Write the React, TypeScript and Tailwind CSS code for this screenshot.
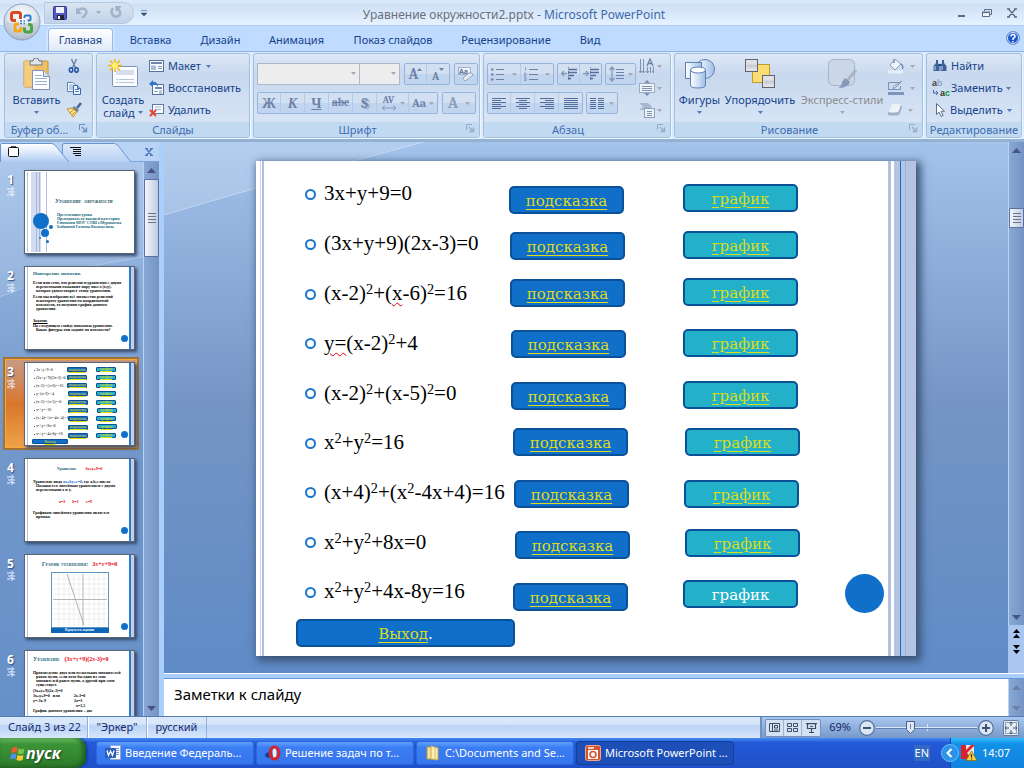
import type { CSSProperties, ReactNode } from 'react';

/* ---------- shared data ---------- */

type Row = { id: string; formula: ReactNode; hint: [number, number]; graph: [number, number]; link: boolean };

const rows: Row[] = [
  { id: 'a', formula: '3x+y+9=0', hint: [253, 25], graph: [427, 23], link: true },
  { id: 'b', formula: '(3x+y+9)(2x-3)=0', hint: [254, 71], graph: [427, 70], link: true },
  {
    id: 'c',
    formula: (
      <>
        (x-2)<Sq />+(<Typo>x</Typo>-6)<Sq />=16
      </>
    ),
    hint: [254, 118],
    graph: [427, 117],
    link: true,
  },
  {
    id: 'd',
    formula: (
      <>
        <Typo>y=</Typo>(x-2)<Sq />+4
      </>
    ),
    hint: [255, 169],
    graph: [427, 168],
    link: true,
  },
  {
    id: 'e',
    formula: (
      <>
        (x-2)<Sq />+(x-5)<Sq />=0
      </>
    ),
    hint: [255, 221],
    graph: [427, 220],
    link: true,
  },
  {
    id: 'f',
    formula: (
      <>
        x<Sq />+y<Sq />=16
      </>
    ),
    hint: [257, 267],
    graph: [429, 267],
    link: true,
  },
  {
    id: 'g',
    formula: (
      <>
        (x+4)<Sq />+(x<Sq />-4x+4)=16
      </>
    ),
    hint: [258, 319],
    graph: [428, 319],
    link: true,
  },
  {
    id: 'h',
    formula: (
      <>
        x<Sq />+y<Sq />+8x=0
      </>
    ),
    hint: [259, 370],
    graph: [429, 368],
    link: true,
  },
  {
    id: 'i',
    formula: (
      <>
        x<Sq />+y<Sq />+4x-8y=16
      </>
    ),
    hint: [257, 422],
    graph: [427, 419],
    link: false,
  },
];

function Sq() {
  return <span className="align-[0.4em] text-[68%] leading-none">2</span>;
}

function Typo({ children }: { children: ReactNode }) {
  return (
    <span className="underline decoration-red-600 decoration-wavy decoration-1 underline-offset-2 group-data-[mini=true]:no-underline">
      {children}
    </span>
  );
}

const at = (p: [number, number], k = 1): CSSProperties => ({ left: p[0] / k, top: p[1] / k });

/* ---------- small pieces ---------- */

function Caret({ off = false, className = '' }: { off?: boolean; className?: string }) {
  return (
    <svg viewBox="0 0 5 3" className={`h-[3px] w-[5px] shrink-0 ${className}`} aria-hidden="true">
      <path d="M0 0h5L2.500 3z" fill={off ? '#a5a9b3' : '#4d7ab8'} />
    </svg>
  );
}

function Tri({ up = false, faded = false }: { up?: boolean; faded?: boolean }) {
  return (
    <svg viewBox="0 0 9 5" className="h-[5px] w-[9px]" aria-hidden="true">
      <path d={up ? 'M0 5h9L4.500 0z' : 'M0 0h9L4.500 5z'} fill={faded ? '#6c7fa5' : '#46557f'} />
    </svg>
  );
}

function Grip() {
  return (
    <span className="flex flex-col gap-[2px]">
      <i className="h-px w-2 bg-[#6d7486]" />
      <i className="h-px w-2 bg-[#6d7486]" />
      <i className="h-px w-2 bg-[#6d7486]" />
      <i className="h-px w-2 bg-[#6d7486]" />
    </span>
  );
}

function Launcher({ off = false }: { off?: boolean }) {
  const c = off ? '#9aa9c4' : '#6c8fc0';
  return (
    <button aria-label="Параметры группы" className="absolute right-[4px] bottom-[4px]">
      <svg viewBox="0 0 9 9" className="size-[9px]">
        <path d="M.5 6V.5H6" fill="none" stroke={c} />
        <path d="M3 3l4 4M7.500 3.500v4h-4" fill="none" stroke={c} strokeWidth="1.300" />
      </svg>
    </button>
  );
}

function Group({ title, width, launcher, children }: { title: string; width: string; launcher?: 'on' | 'off'; children: ReactNode }) {
  return (
    <section
      className={`${width} relative flex h-[85px] shrink-0 flex-col overflow-hidden rounded-[3px] border border-[#a0c0e0] bg-linear-to-b from-[#dde8f5] from-0% via-[#c8d8ee] via-25% to-[#dbe8f7] shadow-[1px_1px_0_#eef6ff]`}
    >
      <div className="min-h-0 flex-1">{children}</div>
      <h2 className="h-[15px] bg-[#c1d9f1] text-center text-[11px] leading-[15px] whitespace-nowrap text-[#3e6db0]">
        <span className={launcher ? 'pr-[18px]' : ''}>{title}</span>
      </h2>
      {launcher && <Launcher off={launcher === 'off'} />}
    </section>
  );
}

function Bar({ children }: { children: ReactNode }) {
  return (
    <div className="flex h-[22px] divide-x divide-[#b3cbea] rounded-[2px] border border-[#97b5dc] bg-linear-to-b from-[#d3e0f2] from-50% to-[#c2d5ef] to-50%">
      {children}
    </div>
  );
}

function Tool({ label, w = 'w-[23px]', children }: { label: string; w?: string; children: ReactNode }) {
  return (
    <button aria-label={label} disabled className={`${w} flex items-center justify-center gap-[3px] text-[#6c82a8]`}>
      {children}
    </button>
  );
}

function Lines({ kind }: { kind: 'left' | 'center' | 'right' | 'full' | 'cols' }) {
  const d = {
    left: 'M0 .5h14M0 2.500h9M0 4.500h14M0 6.500h9M0 8.500h14M0 10.500h9',
    center: 'M0 .5h14M3 2.500h8M0 4.500h14M3 6.500h8M0 8.500h14M3 10.500h8',
    right: 'M0 .5h14M5 2.500h9M0 4.500h14M5 6.500h9M0 8.500h14M5 10.500h9',
    full: 'M0 .5h14M0 2.500h14M0 4.500h14M0 6.500h14M0 8.500h14M0 10.500h14',
    cols: 'M0 .5h6M8 .5h6M0 2.500h6M8 2.500h6M0 4.500h6M8 4.500h6M0 6.500h6M8 6.500h6M0 8.500h6M8 8.500h6M0 10.500h6M8 10.500h6',
  }[kind];
  return (
    <svg viewBox="0 0 14 11" className="h-[11px] w-[14px]">
      <path d={d} stroke="#536d9c" />
    </svg>
  );
}

function MiniIcon({ name }: { name: string }) {
  const box = 'size-4 shrink-0';
  switch (name) {
    case 'cut':
      return (
        <svg viewBox="0 0 16 16" className={box}>
          <path d="M5.500 1l4 9M10.500 1l-4 9" stroke="#6f86aa" strokeWidth="1.500" fill="none" />
          <ellipse cx="5" cy="12" rx="1.700" ry="2.200" fill="none" stroke="#1c4f9e" strokeWidth="1.500" />
          <ellipse cx="10.500" cy="12" rx="1.700" ry="2.200" fill="none" stroke="#1c4f9e" strokeWidth="1.500" />
        </svg>
      );
    case 'copy':
      return (
        <svg viewBox="0 0 16 16" className={box}>
          <path d="M1.500 2.500h5l3 2v7h-8z" fill="#fff" stroke="#5b7fb4" />
          <path d="M3 5h4M3 7h4M3 9h4" stroke="#6e96cf" />
          <path d="M7.500 5.500h4l3 3v6h-7z" fill="#eaf2ff" stroke="#3f68a8" />
          <path d="M9 9.500h4M9 11.500h4" stroke="#4f7fc4" />
          <path d="M11.500 5.500v3h3" fill="#9fc0ee" stroke="#3f68a8" />
        </svg>
      );
    case 'brush':
      return (
        <svg viewBox="0 0 16 16" className={box}>
          <path d="M15 1l-4 5" stroke="#44639a" strokeWidth="2.500" />
          <path d="M8 4l5 4-2 2.500-5-4z" fill="#7a7f8c" />
          <path d="M1 7l5-1 5 4-4 5z" fill="#f4e08c" stroke="#c4972e" />
          <path d="M4 11l3-3M6 13l3-3" stroke="#c4972e" />
        </svg>
      );
    case 'layout':
      return (
        <svg viewBox="0 0 16 16" className={box}>
          <rect x=".5" y="2.500" width="14" height="11" fill="#f7faff" stroke="#56719d" />
          <path d="M2 5h11" stroke="#6f87ab" strokeWidth="2" />
          <rect x="2" y="7.500" width="5" height="4.500" fill="#a9bbd4" />
          <path d="M9 8.500h4M9 10.500h4" stroke="#7c93b7" />
        </svg>
      );
    case 'reset':
      return (
        <svg viewBox="0 0 16 16" className={box}>
          <rect x="3.500" y="4.500" width="11" height="10" fill="#f7faff" stroke="#56719d" />
          <path d="M6 8h7" stroke="#6f87ab" strokeWidth="2" />
          <path d="M5.500 11.500h3M10 11h3M10 13h3" stroke="#7c93b7" />
          <path d="M0 4l4-4v2c4 0 5 2 5 5-1-2-2-2.500-5-2.500V7z" fill="#3470cf" />
        </svg>
      );
    case 'delete':
      return (
        <svg viewBox="0 0 16 16" className={box}>
          <rect x="3.500" y="2.500" width="11" height="9" fill="#f7faff" stroke="#5f7aa6" />
          <path d="M6 5h6M6 7.500h6" stroke="#a6b7cf" />
          <path d="M1 8l6 6M7 8l-6 6" stroke="#e8442c" strokeWidth="2" />
        </svg>
      );
    case 'find':
      return (
        <svg viewBox="0 0 16 16" className={box}>
          <path d="M4 2h2v3l1.500 3v5h-6V8L4 5zM10 2h2v3l2.500 3v5h-6V8L10 5z" fill="#3e619c" />
          <path d="M3 8v4M10 8v4" stroke="#c3d6f3" />
          <path d="M6.500 7h3" stroke="#24457d" strokeWidth="2" />
        </svg>
      );
    case 'replace':
      return (
        <span className="flex w-[18px] shrink-0 flex-col font-['Liberation_Sans',sans-serif] text-[9px] leading-[10px] font-bold" aria-hidden="true">
          <span className="text-left text-[#444]">a<span className="text-[#9aa5b8]">b</span></span>
          <span className="flex items-center justify-end gap-px text-[#333]">
            <svg viewBox="0 0 6 6" className="size-[6px]"><path d="M.5 0v3H5M3 1l2 2-2 2" fill="none" stroke="#3b69ab" /></svg>
            <span>a<span className="text-[#159a24]">c</span></span>
          </span>
        </span>
      );
    case 'select':
      return (
        <svg viewBox="0 0 16 16" className={box}>
          <path d="M4.500 1.500v11l2.600-2.500 2 4.500 2-1-2-4.300h3.400z" fill="#fff" stroke="#5a6d90" />
        </svg>
      );
    case 'fill':
      return (
        <svg viewBox="0 0 18 16" className="h-4 w-[18px] shrink-0">
          <path d="M8 1l6 5-6 6-5-5z" fill="#eef3fa" stroke="#8c9db9" />
          <path d="M7 5V1M14 6c2 1 2 4 1.500 5" fill="none" stroke="#7a8fb4" strokeWidth="1.500" />
          <path d="M1 14h15" stroke="#e9eef6" strokeWidth="3" />
        </svg>
      );
    case 'outline':
      return (
        <svg viewBox="0 0 18 16" className="h-4 w-[18px] shrink-0">
          <path d="M12 2.500H1.500v7h12V6" fill="none" stroke="#7a90b5" />
          <path d="M15 1L8 8l-2 .5.500-2z" fill="#e6edf7" stroke="#8496b4" />
          <path d="M1 13.500h16" stroke="#7d95be" strokeWidth="3" />
        </svg>
      );
    case 'effect':
      return (
        <svg viewBox="0 0 16 16" className={box}>
          <path d="M5 3.500h8q2.500 0 2 2.500l-2 5q-1 2.500-3.500 2.500H3Q.5 13.500 1 11l2-5q.5-2.500 2-2.500z" fill="#9fb1cd" />
          <path d="M6 2h6q2 0 1.500 2L12 8.500q-.7 2-3 2H4q-2.500 0-2-2L4 4q.5-2 2-2z" fill="#eef2f8" />
        </svg>
      );
    case 'direction':
      return (
        <svg viewBox="0 0 16 16" className={box}>
          <path d="M1.500 1v14M4.500 1v14M8.500 9v6M11.500 9v6M14.500 9v6M0 13l1.500 2L3 13M3.500 13l1 2 1-2M7 13l1.500 2L10 13M13 13l1.500 2" fill="none" stroke="#8193b2" />
          <path d="M8 8l3-7 3 7M9 5.500h4" fill="none" stroke="#6c82a8" strokeWidth="1.300" />
        </svg>
      );
    case 'valign':
      return (
        <svg viewBox="0 0 16 16" className={box}>
          <rect x=".5" y="3.500" width="15" height="9" fill="#eef3fa" stroke="#9aabc6" />
          <path d="M3 6.500h10M3 8.500h10M3 10.500h10" stroke="#8193b2" />
          <path d="M5 3l3-3 3 3zM5 13l3 3 3-3z" fill="#7d90b2" />
        </svg>
      );
    default:
      return (
        <svg viewBox="0 0 16 16" className={box}>
          <path d="M0 1h9l4 3.500L9 8H0l4-3.500z" fill="#a9b8cf" />
          <rect x="5.500" y="6.500" width="10" height="9" fill="#edf2f9" stroke="#8c9fbe" />
          <path d="M8 9.500h5M8 11.500h5M8 13.500h5" stroke="#8193b2" />
        </svg>
      );
  }
}

function IconRow({ icon, text, caret, gap = 'gap-[3px]' }: { icon: string; text?: string; caret?: 'on' | 'off'; gap?: string }) {
  return (
    <button aria-label={text ?? icon} className={`flex h-[22px] items-center ${gap} whitespace-nowrap text-[#15428b]`}>
      <MiniIcon name={icon} />
      {text && <span className="text-[11px] leading-4">{text}</span>}
      {caret && <Caret off={caret === 'off'} className="ml-[2px]" />}
    </button>
  );
}

function BigButton({ text, second, off, w, children }: { text: string; second?: string; off?: boolean; w: string; children: ReactNode }) {
  return (
    <button className={`${w} flex flex-col items-center text-[11px] leading-[13px] whitespace-nowrap ${off ? 'text-[#8d8d8d]' : 'text-[#15428b]'}`}>
      <span className="flex h-[38px] items-center justify-center">{children}</span>
      <span>{text}</span>
      {second ? (
        <span className="flex items-center gap-[3px]">
          {second}
          <Caret off={off} />
        </span>
      ) : (
        <Caret off={off} className="mt-[5px]" />
      )}
    </button>
  );
}

/* ---------- ribbon ---------- */

function TitleBar() {
  return (
    <header className="relative flex h-[26px] shrink-0 items-center border-b border-[#b0cff7] bg-linear-to-b from-[#d9e8fb] from-10% via-[#cfe0f6] via-20% to-[#e6f2ff]">
      <div className="ml-[44px] flex h-[22px] w-[90px] items-center gap-[9px] rounded-r-full border border-[#b6c8e3] bg-linear-to-b from-[#d9e4f2] to-[#c2d3e9] pl-2">
        <button aria-label="Сохранить">
          <svg viewBox="0 0 14 14" className="size-[14px]">
            <rect x=".5" y=".5" width="13" height="13" rx="1" fill="#5657c3" stroke="#333791" />
            <rect x="3" y="1" width="8" height="6" fill="#eef2fc" />
            <rect x="4" y="9" width="7" height="5" fill="#20243f" />
            <rect x="5" y="10" width="2" height="3" fill="#fff" />
          </svg>
        </button>
        <button aria-label="Отменить" disabled className="flex items-center gap-2">
          <svg viewBox="0 0 12 13" className="h-[13px] w-3">
            <path d="M2 4.500c5-4 10-1 8 3Q9 10 6 12" fill="none" stroke="#a3b1c9" strokeWidth="2.400" />
            <path d="M0 1v7h6z" fill="#a3b1c9" />
          </svg>
          <Caret off />
        </button>
        <button aria-label="Повторить" disabled>
          <svg viewBox="0 0 12 13" className="h-[13px] w-3">
            <path d="M3 2Q0 6 3 9.500q4 3 7-1 1-4-3-6" fill="none" stroke="#a3b1c9" strokeWidth="2.400" />
            <path d="M5 0h6v1L6 6z" fill="#a3b1c9" />
          </svg>
        </button>
      </div>
      <button aria-label="Настройка панели" className="ml-[7px]">
        <svg viewBox="0 0 6 6" className="size-[6px]">
          <path d="M0 .5h6M0 3h6L3 6z" stroke="#4a6487" strokeWidth=".6" fill="#31537f" />
        </svg>
      </button>
      <h1 className="flex-1 pt-1 pr-[104px] pl-[28px] text-center text-[12px] whitespace-nowrap text-[#3e6aaa]">
        <span className="text-[#69707c]">Уравнение окружности2.pptx</span> - Microsoft PowerPoint
      </h1>
      <div className="flex items-center gap-[15px] pr-[7px]">
        <button aria-label="Свернуть">
          <svg viewBox="0 0 10 10" className="size-[10px]"><path d="M1 8h7" stroke="#5b6b85" strokeWidth="2" /></svg>
        </button>
        <button aria-label="Развернуть">
          <svg viewBox="0 0 10 10" className="size-[10px]">
            <path d="M2.500 3V1.500h7v5H8" fill="none" stroke="#5b6b85" />
            <path d="M.5 4.500h7v4h-7zM0 4h8" fill="#eef5ff" stroke="#5b6b85" />
          </svg>
        </button>
        <button aria-label="Закрыть">
          <svg viewBox="0 0 10 10" className="size-[10px]"><path d="M1.500 1l7 8M8.500 1l-7 8M0 1h3M7 1h3M0 9h3M7 9h3" stroke="#5b6b85" strokeWidth="1.300" /></svg>
        </button>
      </div>
      <button aria-label="Кнопка Office" className="absolute top-[3px] left-[3px] z-10">
        <svg viewBox="0 0 38 38" className="size-[38px]">
          <defs>
            <radialGradient id="orb" cx=".5" cy=".35" r=".65">
              <stop offset="0" stopColor="#fff" />
              <stop offset=".6" stopColor="#dfe5ee" />
              <stop offset="1" stopColor="#a8b5c8" />
            </radialGradient>
          </defs>
          <circle cx="19" cy="19" r="18" fill="url(#orb)" stroke="#8da0bc" />
          <path d="M3 19a16 16 0 0 0 32 0Q19 23 3 19z" fill="#b9c3d1" opacity=".5" />
          <g fill="none" strokeWidth="3">
            <path d="M13 17.500h-2.500q-2 0-2-2v-4q0-2 2-2h5q2 0 2 2V16" stroke="#d9481f" />
            <path d="M21.500 15v-1.500q0-1 1-1h4q1 0 1 1v3q0 1-1 1h-2" stroke="#2f7bd0" strokeWidth="2" />
            <path d="M16 21h-2.500q-1.500 0-1.500 1.500v3.500q0 2 1.500 2H16q2 0 2-2v-2" stroke="#f4a61c" />
            <path d="M21.500 24.500V27q0 2 2 2h3q2 0 2-2v-3.500q0-2-2-2H25" stroke="#4aa63c" />
          </g>
          <path d="M17 18h2M20.500 18h1.500M17 20.500h2M20.500 20.500h1.500" stroke="#3979c8" strokeWidth="1.500" />
        </svg>
      </button>
    </header>
  );
}

const tabs = [
  ['Вставка', 'w-[71px]'],
  ['Дизайн', 'w-[69px]'],
  ['Анимация', 'w-[83px]'],
  ['Показ слайдов', 'w-[110px]'],
  ['Рецензирование', 'w-[116px]'],
  ['Вид', 'w-[52px]'],
];

function TabStrip() {
  return (
    <nav className="flex h-[25px] shrink-0 items-end bg-[#bfdbff] pr-[4px] pl-[48px] text-[11px] text-[#15428b]">
      <button className="mr-[2px] h-[23px] w-[65px] rounded-t-[4px] border border-b-0 border-[#97b9e8] bg-linear-to-b from-white to-[#dfeaf8] shadow-[0_0_3px_#fff]">Главная</button>
      {tabs.map(([t, w]) => (
        <button key={t} className={`${w} h-[22px] whitespace-nowrap`}>{t}</button>
      ))}
      <button aria-label="Справка" className="mb-[6px] ml-auto">
        <svg viewBox="0 0 14 14" className="size-[14px]">
          <circle cx="7" cy="7" r="6.500" fill="#1c56cf" stroke="#7795c7" />
          <circle cx="7" cy="7" r="5.500" fill="none" stroke="#dce9ff" />
          <path d="M5 5.500Q5 3.500 7 3.500t2 2Q9 6.500 7 7.500V9" fill="none" stroke="#fff" strokeWidth="1.500" />
          <path d="M6.300 10h1.500v1.300H6.300z" fill="#fff" />
        </svg>
      </button>
    </nav>
  );
}

function Ribbon() {
  return (
    <div className="flex h-[91px] shrink-0 gap-[3px] overflow-hidden border-t border-b-[3px] border-t-[#8db2e3] border-b-[#94b1d4] bg-[#dceafb] pt-px pr-[2px] pl-1">
      <Group title="Буфер об..." width="w-[89px]" launcher="on">
        <div className="flex pt-px pl-[5px]">
          <BigButton text="Вставить" w="w-[53px]">
            <svg viewBox="0 0 28 32" className="h-[32px] w-[28px]">
              <rect x="1" y="3" width="24" height="26" rx="1" fill="#efbf66" stroke="#c9923a" />
              <rect x="1" y="3" width="10" height="26" fill="#f7d58e" opacity=".6" />
              <path d="M7 3h3q0-3 3-3t3 3h3v4H7z" fill="#dfe4ec" stroke="#717986" />
              <path d="M9.500 12.500h11l6 6v13h-17z" fill="#fff" stroke="#7f91b5" />
              <path d="M20.500 12.500v6h6" fill="#d7e2f3" stroke="#7f91b5" />
              <path d="M12 17.500h7M12 20.500h12M12 23.500h12M12 26.500h12" stroke="#9aaed0" />
            </svg>
          </BigButton>
          <div className="flex flex-col pl-[3px]">
            <IconRow icon="cut" />
            <IconRow icon="copy" />
            <IconRow icon="brush" />
          </div>
        </div>
      </Group>

      <Group title="Слайды" width="w-[154px]">
        <div className="flex pt-px pl-[3px]">
          <BigButton text="Создать" second="слайд" w="w-[46px]">
            <svg viewBox="0 0 32 32" className="size-[32px]">
              <rect x="5.500" y="8.500" width="25" height="20" rx="1" fill="#fbfcff" stroke="#8093b4" />
              <rect x="9" y="12" width="18" height="5" fill="#d5deec" />
              <path d="M9 21.500h2M12 21.500h15M9 24.500h2M12 24.500h15" stroke="#b7c3d7" />
              <path d="M8 1v13M1 7.500h14M3 2.500l10 10M13 2.500l-10 10" stroke="#f6b80f" strokeWidth="1.600" />
              <circle cx="8" cy="7.500" r="3" fill="#ffee66" />
            </svg>
          </BigButton>
          <div className="flex flex-col pl-[3px]">
            <IconRow icon="layout" text="Макет" caret="on" />
            <IconRow icon="reset" text="Восстановить" />
            <IconRow icon="delete" text="Удалить" />
          </div>
        </div>
      </Group>

      <Group title="Шрифт" width="w-[227px]" launcher="off">
        <div className="flex flex-col gap-[7px] pt-[9px] pl-[3px]">
          <div className="flex h-[22px] items-center gap-1">
            <div className="flex">
              <label className="relative block">
                <select aria-label="Шрифт" disabled className="block h-[22px] w-[103px] appearance-none border border-[#abb8cb] bg-[#ededed]" />
                <Caret off className="absolute top-[9px] right-1" />
              </label>
              <label className="relative block">
                <select aria-label="Размер шрифта" disabled className="block h-[22px] w-[40px] appearance-none border border-l-0 border-[#abb8cb] bg-[#ededed]" />
                <Caret off className="absolute top-[9px] right-1" />
              </label>
            </div>
            <Bar>
              <Tool label="Увеличить размер" w="w-[22px]">
                <span className="pt-px font-serif text-[15px] leading-none font-bold">A</span>
                <svg viewBox="0 0 5 3" className="mt-1 -ml-[4px] h-[3px] w-[5px] self-start"><path d="M0 3h5L2.500 0z" fill="#6c82a8" /></svg>
              </Tool>
              <Tool label="Уменьшить размер" w="w-[22px]">
                <span className="pt-1 font-serif text-[11px] leading-none font-bold">A</span>
                <svg viewBox="0 0 5 3" className="mt-1 -ml-[3px] h-[3px] w-[5px] self-start"><path d="M0 0h5L2.500 3z" fill="#6c82a8" /></svg>
              </Tool>
            </Bar>
            <Bar>
              <Tool label="Очистить формат" w="w-[22px]">
                <svg viewBox="0 0 17 17" className="size-[17px]">
                  <rect x=".5" y="1.500" width="12" height="7" fill="#f0f4fa" stroke="#9fb0ca" />
                  <text x="1" y="8" fontSize="7" fontWeight="bold" fill="#5d7299">Aa</text>
                  <path d="M5 12l6-5q3-1 4 2l-6 5q-4 2-4-2z" fill="#e6ebf3" stroke="#93a4c0" />
                </svg>
              </Tool>
            </Bar>
          </div>
          <div className="flex gap-1 font-serif text-[14px] font-bold">
            <Bar>
              <Tool label="Полужирный">Ж</Tool>
              <Tool label="Курсив" w="w-[24px]"><i>К</i></Tool>
              <Tool label="Подчёркнутый" w="w-[24px]"><u>Ч</u></Tool>
              <Tool label="Зачёркнутый" w="w-[24px]"><s className="text-[11px]">abc</s></Tool>
              <Tool label="Тень" w="w-[24px]"><span className="[text-shadow:2px_1px_1px_#98a9c5]">S</span></Tool>
              <Tool label="Интервал" w="w-[32px]">
                <span className="flex flex-col items-center text-[10px] leading-[9px]">
                  AV
                  <svg viewBox="0 0 16 6" className="h-[6px] w-4"><path d="M1 3h14M4 .5L1 3l3 2.500M12 .5L15 3l-3 2.500" fill="none" stroke="#8297bb" /></svg>
                </span>
                <Caret off />
              </Tool>
              <Tool label="Регистр" w="w-[28px]"><span className="text-[12px]">Aa</span><Caret off /></Tool>
            </Bar>
            <Bar>
              <Tool label="Цвет текста" w="w-[32px]"><span className="pr-1 text-[16px] text-[#8c9dbb]">A</span><Caret off /></Tool>
            </Bar>
          </div>
        </div>
      </Group>

      <Group title="Абзац" width="w-[188px]" launcher="off">
        <div className="flex justify-between pr-[8px] pl-[3px]">
          <div className="flex flex-col gap-[7px] pt-[9px]">
            <div className="flex gap-[3px]">
              <Bar>
                <Tool label="Маркеры" w="w-[33px]">
                  <svg viewBox="0 0 14 14" className="size-[14px]">
                    <path d="M5 2.500h8M5 7.500h8M5 12.500h8" stroke="#6c82a8" />
                    <path d="M0 1.500h2.500v2H0zM0 6.500h2.500v2H0zM0 11.500h2.500v2H0z" fill="#6c82a8" />
                  </svg>
                  <Caret off className="ml-1" />
                </Tool>
                <Tool label="Нумерация" w="w-[32px]">
                  <svg viewBox="0 0 14 14" className="size-[14px]">
                    <path d="M5 2.500h9M5 7.500h9M5 12.500h9" stroke="#6c82a8" />
                    <path d="M1.500 0v4M0 6h2v1.500H0V9h2.500M0 10.500h2v3H0M0 12h2" fill="none" stroke="#8294b4" strokeWidth=".8" />
                  </svg>
                  <Caret off className="ml-1" />
                </Tool>
              </Bar>
              <Bar>
                <Tool label="Уменьшить отступ" w="w-[22px]">
                  <svg viewBox="0 0 16 14" className="h-[14px] w-4">
                    <path d="M7 2.500h9M7 5.500h9M7 8.500h6M7 11.500h3" stroke="#536d9c" strokeWidth="1.500" />
                    <path d="M7.500 0v14" stroke="#6c82a8" strokeDasharray="1 1" />
                    <path d="M6 6.500H1M3 4L.5 6.500 3 9" fill="none" stroke="#8597b7" strokeWidth="1.300" />
                  </svg>
                </Tool>
                <Tool label="Увеличить отступ" w="w-[21px]">
                  <svg viewBox="0 0 16 14" className="h-[14px] w-4">
                    <path d="M7 2.500h9M7 5.500h9M7 8.500h6M7 11.500h3" stroke="#536d9c" strokeWidth="1.500" />
                    <path d="M7.500 0v14" stroke="#6c82a8" strokeDasharray="1 1" />
                    <path d="M0 6.500h5M3 4l2.500 2.500L3 9" fill="none" stroke="#8597b7" strokeWidth="1.300" />
                  </svg>
                </Tool>
              </Bar>
              <Bar>
                <Tool label="Междустрочный интервал" w="w-[29px]">
                  <svg viewBox="0 0 16 16" className="size-4">
                    <path d="M7 3.500h8M7 6.500h8M7 9.500h8M7 12.500h8" stroke="#6c82a8" />
                    <path d="M3 1v14M.5 4L3 1l2.500 3M.5 12L3 15l2.500-3" fill="none" stroke="#8597b7" strokeWidth="1.300" />
                  </svg>
                  <Caret off />
                </Tool>
              </Bar>
            </div>
            <div className="flex gap-[3px]">
              <Bar>
                <Tool label="По левому краю"><Lines kind="left" /></Tool>
                <Tool label="По центру" w="w-[24px]"><Lines kind="center" /></Tool>
                <Tool label="По правому краю" w="w-[24px]"><Lines kind="right" /></Tool>
                <Tool label="По ширине"><Lines kind="full" /></Tool>
              </Bar>
              <Bar>
                <Tool label="Колонки" w="w-[30px]"><Lines kind="cols" /><Caret off className="ml-[2px]" /></Tool>
              </Bar>
            </div>
          </div>
          <div className="flex flex-col pt-px">
            <IconRow icon="direction" caret="off" gap="gap-0" />
            <IconRow icon="valign" caret="off" gap="gap-0" />
            <IconRow icon="smartart" caret="off" gap="gap-0" />
          </div>
        </div>
      </Group>

      <Group title="Рисование" width="w-[249px]" launcher="off">
        <div className="flex pt-px pl-[3px]">
          <BigButton text="Фигуры" w="w-[43px]">
            <svg viewBox="0 0 32 32" className="size-[32px]">
              <defs>
                <linearGradient id="shape" x1="0" x2="1"><stop stopColor="#fff" /><stop offset="1" stopColor="#9ebfe9" /></linearGradient>
              </defs>
              <circle cx="21" cy="11" r="9.500" fill="url(#shape)" stroke="#5d81b7" />
              <rect x="1.500" y="4.500" width="16" height="16" fill="url(#shape)" stroke="#5d81b7" />
              <path d="M6.500 12v15q0 3 7.500 3t7.500-3V12" fill="url(#shape)" stroke="#5d81b7" />
              <ellipse cx="14" cy="12" rx="7.500" ry="3" fill="#fff" stroke="#5d81b7" />
            </svg>
          </BigButton>
          <BigButton text="Упорядочить" w="w-[78px]">
            <svg viewBox="0 0 32 32" className="size-[32px]">
              <rect x="8.500" y="6.500" width="17" height="18" fill="#f9dd73" stroke="#c39a2d" />
              <rect x="1.500" y="1.500" width="12" height="12" fill="#dfe1e5" stroke="#5e6470" />
              <rect x="18.500" y="17.500" width="12" height="12" fill="#dfe1e5" stroke="#5e6470" />
              <path d="M3 8h10M20 24h10" stroke="#c9ccd2" strokeWidth="3" />
            </svg>
          </BigButton>
          <BigButton text="Экспресс-стили" off w="w-[86px]">
            <svg viewBox="0 0 32 32" className="size-[32px]">
              <rect x="2.500" y="1.500" width="26" height="26" rx="5" fill="#cbd6e6" stroke="#a5b5ce" />
              <path d="M30 12L20 24" stroke="#a9b4c6" strokeWidth="3" />
              <path d="M19 20l5 4q-2 6-12 6 4-2 4-6z" fill="#8699b8" />
            </svg>
          </BigButton>
          <div className="flex flex-col pl-[2px]">
            <IconRow icon="fill" caret="off" />
            <IconRow icon="outline" caret="off" />
            <IconRow icon="effect" caret="off" />
          </div>
        </div>
      </Group>

      <Group title="Редактирование" width="w-[96px]">
        <div className="flex flex-col pt-px pl-[5px]">
          <IconRow icon="find" text="Найти" />
          <IconRow icon="replace" text="Заменить" caret="on" gap="gap-px" />
          <IconRow icon="select" text="Выделить" caret="on" gap="gap-[2px]" />
        </div>
      </Group>
    </div>
  );
}

/* ---------- outline pane ---------- */

const dot = 'absolute rounded-full bg-[#106fc8]';

function Edges() {
  return (
    <>
      <i className="absolute inset-y-0 left-[2px] w-px bg-[#b5c0e0]" />
      <i className="absolute inset-y-0 right-0 w-[3px] bg-[#c3cee8]" />
      <i className="absolute inset-y-0 right-[3px] w-[2px] bg-[#2a7bcb]" />
      <i className={`${dot} right-[6px] bottom-[7px] size-[7px]`} />
    </>
  );
}

function ThumbOne() {
  return (
    <>
      <i className="absolute inset-y-[1px] left-[2px] w-px bg-[#b5c0e0]" />
      <i className="absolute inset-y-[1px] left-[6px] w-[10px] bg-[#d2dbef]" />
      <i className="absolute inset-y-[1px] left-[11px] w-px bg-[#aab6da]" />
      <i className="absolute inset-y-[1px] left-[14px] w-px bg-[#aab6da]" />
      <i className="absolute inset-y-[1px] left-[21px] w-px bg-[#b5c0e0]" />
      <i className={`${dot} top-[42px] left-[8px] size-4`} />
      <i className={`${dot} top-[58px] left-4 size-2`} />
      <i className={`${dot} top-[54px] left-[24px] size-1`} />
      <i className={`${dot} top-[66px] left-[14px] size-[2px]`} />
      <i className={`${dot} top-[69px] left-[21px] size-[3px]`} />
      <p className="pt-[26px] pl-[30px] text-[6px] leading-2 font-bold whitespace-pre text-[#15505e] italic [font-variant:small-caps]">Уравнение  окружности</p>
      <p className="pt-[8px] pl-[32px] text-[4px] leading-[4px] font-bold whitespace-nowrap text-[#156a7b]">
        Презентация урока<br />Преподавателя высшей категории<br />Гимназии МОУ СОШ г.Мурманска<br />Бабкиной Галины Васильевны
      </p>
    </>
  );
}

function ThumbTwo() {
  return (
    <div className="px-2 pt-1 text-[4px] leading-[4px] font-bold whitespace-nowrap text-black">
      <p className="pb-1 text-[5px] leading-[6px] text-[#1c667a]">Повторение  понятия.</p>
      <p className="pb-[2px]">Если известно, что решением уравнения с двумя<br />&nbsp; &nbsp;переменными называют пару чисел (x;y),<br />&nbsp; &nbsp;которая удовлетворяет этому уравнению.</p>
      <p className="pb-[8px]">Если мы изобразим всё множество решений<br />&nbsp; &nbsp;некоторого уравнения на координатной<br />&nbsp; &nbsp;плоскости, то получим график данного<br />&nbsp; &nbsp;уравнения.</p>
      <p className="pb-px underline">Задание</p>
      <p>На следующем слайде показаны уравнения.<br />&nbsp; &nbsp;Какие фигуры они задают на плоскости?</p>
    </div>
  );
}

const shapeSmall = 'absolute flex h-[5px] w-5 items-center justify-center rounded-[1px] border border-[#0b5199] text-[4px] leading-none text-[#e2dc00] underline';

function ThumbThree() {
  return (
    <>
      <ul data-mini="true" className="group flex flex-col pt-[3px] pl-[9px] text-[4px] text-black">
        {rows.map((r) => (
          <li key={r.id} className="flex h-2 items-center gap-px whitespace-nowrap leading-none">
            <i className="size-px bg-[#106fc8]" />
            <span>{r.formula}</span>
          </li>
        ))}
      </ul>
      {rows.map((r) => (
        <div key={r.id}>
          <span className={`${shapeSmall} bg-[#106fc8]`} style={at(r.hint, 6)}>подсказка</span>
          <span className={`${shapeSmall} bg-[#23b0c9]`} style={at(r.graph, 6)}>график</span>
        </div>
      ))}
      <span className={`${shapeSmall} w-9 bg-[#106fc8]`} style={at([42, 458], 6)}>Выход</span>
    </>
  );
}

function ThumbFour() {
  return (
    <div className="px-2 pt-2 text-[4px] leading-[4px] font-bold whitespace-nowrap text-black">
      <p className="flex justify-center gap-[9px] pb-[9px]"><span className="text-[#1c667a]">Уравнение</span><span className="text-red-600">3x+y+9=0</span></p>
      <p className="pb-2">Уравнение вида <span className="text-[#106fc8]">ax+by+c=0</span>, где a,b,c-числа<br />&nbsp; &nbsp;Называется линейным уравнением с двумя<br />&nbsp; &nbsp;переменными x и y.</p>
      <p className="flex gap-[7px] pb-[7px] pl-[26px] text-red-600"><span>a=3</span><span>b=1</span><span>c=9</span></p>
      <p>Графиком линейного уравнения является<br />&nbsp; &nbsp;прямая.</p>
    </div>
  );
}

function ThumbFive() {
  return (
    <div className="flex flex-col items-center pt-[5px] text-[6px] leading-2 font-bold whitespace-nowrap">
      <p className="flex gap-[4px] [font-variant:small-caps]"><span className="text-[#1c667a]">График уравнения:</span><span className="text-red-600">3x+y+9=0</span></p>
      <svg viewBox="0 0 58 56" className="mt-1 h-[56px] w-[58px]">
        <rect x=".5" y=".5" width="57" height="55" fill="#fff" stroke="#5e93c6" />
        <path d="M8 2v52M13 2v52M18 2v52M23 2v52M28 2v52M38 2v52M43 2v52M48 2v52M53 2v52M2 7h54M2 12h54M2 17h54M2 22h54M2 32h54M2 37h54M2 42h54M2 47h54" stroke="#e4e4e4" strokeWidth=".6" />
        <path d="M32 2v52M2 27.500h54M16 2l17 51" stroke="#a3a3a3" strokeWidth=".8" />
      </svg>
      <p className="h-[5px] w-[58px] bg-[#0f65b7] text-center text-[3px] leading-[5px] text-white">Вернуться к заданию</p>
    </div>
  );
}

function ThumbSix() {
  return (
    <div className="px-2 pt-1 text-[4px] leading-[4px] font-bold whitespace-pre text-black">
      <p className="flex gap-[5px] pb-2 text-[6px] leading-2 [font-variant:small-caps]"><span className="text-[#1c667a]">Уравнение</span><span className="text-red-600">(3x+y+9)(2x-3)=0</span></p>
      <p>Произведение двух или нескольких множителей<br />{'   '}равно нулю, если хотя бы один из этих<br />{'   '}множителей равен нулю, а другой при этом<br />{'   '}существует.</p>
      <p className="pt-px leading-[5px]">(3x+y+9)(2x-3)=0<br />3x+y+9=0   или              2x-3=0<br />y=-3x-9                            2x=3<br />{'                                           '}x=1,5<br />График данного уравнения – две</p>
    </div>
  );
}

const thumbs = [
  { n: 1, body: <ThumbOne />, edges: false },
  { n: 2, body: <ThumbTwo />, edges: true },
  { n: 3, body: <ThumbThree />, edges: true },
  { n: 4, body: <ThumbFour />, edges: true },
  { n: 5, body: <ThumbFive />, edges: true },
  { n: 6, body: <ThumbSix />, edges: true },
];

function SidePane() {
  return (
    <aside className="flex w-[159px] shrink-0 flex-col">
      <div className="relative flex h-[20px] shrink-0 items-center border-b border-[#7ba3dc] bg-[#b9d3f5]">
        <svg viewBox="0 0 159 20" className="absolute inset-0 h-5 w-[159px]" aria-hidden="true">
          <defs>
            <linearGradient id="tabon" x2="0" y2="1"><stop stopColor="#fff" /><stop offset=".5" stopColor="#dce9fb" /><stop offset="1" stopColor="#aecbf3" /></linearGradient>
            <linearGradient id="taboff" x2="0" y2="1"><stop stopColor="#dfebfb" /><stop offset="1" stopColor="#b7d0f2" /></linearGradient>
          </defs>
          <path d="M62.500 20V3q0-1.500 2-1.500h50q2 0 5 4L131 20" fill="url(#taboff)" stroke="#6794d3" />
          <path d="M.5 20V3Q.5 1.500 2 1.500h50q2 0 5 4L69 20" fill="url(#tabon)" stroke="#6794d3" />
        </svg>
        <button aria-label="Слайды" className="relative ml-2">
          <svg viewBox="0 0 12 12" className="size-3"><rect x=".5" y="1.500" width="10" height="9" rx="1" fill="#fff" stroke="#111" /><path d="M3 1h5" stroke="#111" strokeWidth="1.500" /></svg>
        </button>
        <button aria-label="Структура" className="relative ml-[50px]">
          <svg viewBox="0 0 12 10" className="h-[10px] w-3"><path d="M0 .5h11M3 2.500h8M3 4.500h8M3 6.500h8M0 .5h6M5 8.500h6" stroke="#111" /></svg>
        </button>
        <button aria-label="Закрыть панель" className="relative mr-[6px] ml-auto">
          <svg viewBox="0 0 8 8" className="size-2"><path d="M1.500 1l5 6M6.500 1l-5 6M0 .7h3M5 .7h3M0 7.300h3M5 7.300h3" stroke="#4b79ba" strokeWidth="1.300" /></svg>
        </button>
      </div>
      <div className="flex min-h-0 flex-1">
        <div className="relative min-w-0 flex-1 overflow-hidden bg-linear-to-b from-[#a3c1e9] via-[#7398cb] via-45% to-[#6690c9]">
          <svg viewBox="0 0 143 160" className="absolute top-0 left-0 h-40 w-[143px]" aria-hidden="true">
            <path d="M0 135Q70 105 143 95V0H0z" fill="#fff" opacity=".1" />
            <path d="M0 135Q70 105 143 95" fill="none" stroke="#fff" opacity=".25" />
          </svg>
          <ol className="relative flex flex-col gap-[3px] pt-[3px] pl-[3px]">
            {thumbs.map(({ n, body, edges }) => (
              <li
                key={n}
                className={`flex h-[93px] w-[136px] shrink-0 border-2 ${n === 3 ? 'border-[#a17336] bg-linear-to-b from-[#c9987c] from-5% via-[#d8762a] via-50% to-[#efa348] shadow-[inset_0_0_0_1px_#f6a93b]' : 'border-transparent'}`}
              >
                <div className="flex w-[19px] shrink-0 flex-col items-start pt-[6px] pl-[2px] text-[12px] leading-[14px] font-bold text-white">
                  <span className="[text-shadow:1px_1px_1px_#3b5378]">{n}</span>
                  <svg viewBox="0 0 8 10" className="h-[10px] w-2" aria-hidden="true">
                    <path d="M0 2h4M1 5h3M0 8h3M5 0v3M7 1L4 5h4M5 6v4M3 7l5 1" stroke="#eef4ff" strokeWidth="1" fill="none" />
                  </svg>
                </div>
                <button
                  aria-label={`Слайд ${n}`}
                  className="relative mt-[3px] block h-[84px] w-[111px] overflow-hidden border border-[#5d6573] bg-white text-left font-['Liberation_Serif',serif] shadow-[2px_2px_3px_#33496d]"
                >
                  <span className="flex h-full flex-col justify-start">
                    {edges && <Edges />}
                    {body}
                  </span>
                </button>
              </li>
            ))}
          </ol>
        </div>
        <Scroll>
          <div className="mb-auto flex h-[78px] w-[15px] items-center justify-center rounded-[1px] border border-[#5c6f9f] bg-linear-to-r from-[#f4f6fa] to-[#bccce4]"><Grip /></div>
        </Scroll>
      </div>
    </aside>
  );
}

function Scroll({ faded = false, children }: { faded?: boolean; children?: ReactNode }) {
  return (
    <div className="flex min-h-0 w-4 max-w-4 shrink-0 grow flex-col items-center border-l border-[#b8d3fa] bg-linear-to-r from-[#8aa7d3] to-[#7395c4]">
      <button aria-label="Вверх" className="flex h-[17px] shrink-0 items-center"><Tri up faded={faded} /></button>
      <div className="flex min-h-0 flex-1 flex-col">{children}</div>
      <button aria-label="Вниз" className="flex h-[16px] shrink-0 items-center"><Tri faded={faded} /></button>
    </div>
  );
}

/* ---------- slide ---------- */

const shape = "absolute flex h-7 w-[115px] items-center justify-center rounded-[5px] border-2 border-[#0b5199] pt-[2px] font-['DejaVu_Serif',serif] text-[15px] leading-none";

function Slide() {
  return (
    <article className="relative h-[495px] w-[660px] shrink-0 bg-white font-['Liberation_Serif',serif] shadow-[3px_3px_8px_2px_#3a5377]">
      <i className="absolute inset-y-0 left-[4px] w-px bg-[#cbd3ea]" />
      <i className="absolute inset-y-0 left-[6px] w-[2px] bg-[#b3bfe0]" />
      <i className="absolute inset-y-0 right-[25px] w-[3px] bg-[#b3c0e2]" />
      <i className="absolute inset-y-0 right-0 w-[22px] bg-[#b5c4e3]" />
      <i className="absolute inset-y-0 right-[15px] w-px bg-[#106fc8]" />
      <i className="absolute inset-y-0 right-[10px] w-px bg-[#9db1da]" />
      <ul className="flex h-[455px] flex-col pt-2 pl-[49px] text-[21px] text-black">
        {rows.map((r) => (
          <li key={r.id} className="flex flex-1 items-center gap-2 leading-none whitespace-nowrap">
            <i className="mt-[2px] size-[11px] rounded-full border-2 border-[#1a75cd]" />
            <span>{r.formula}</span>
          </li>
        ))}
      </ul>
      {rows.map((r) => (
        <div key={r.id}>
          <a href="#hint" className={`${shape} bg-[#106fc8] text-[#dfdb1c] underline decoration-[#dfdb1c] decoration-1 underline-offset-3`} style={at(r.hint)}>подсказка</a>
          {r.link ? (
            <a href="#graph" className={`${shape} bg-[#23b0c9] text-[#d8dd18] underline decoration-[#d8dd18] decoration-1 underline-offset-3`} style={at(r.graph)}>график</a>
          ) : (
            <span className={`${shape} bg-[#23b0c9] text-white`} style={at(r.graph)}>график</span>
          )}
        </div>
      ))}
      <div className={`${shape} w-[219px] bg-[#106fc8] text-white`} style={at([40, 458])}>
        <a href="#exit" className="text-[#dfdb1c] underline decoration-1 underline-offset-3">Выход</a>.
      </div>
      <i className={`${dot} size-[39px]`} style={at([589, 413])} />
    </article>
  );
}

function Workspace() {
  return (
    <main className="flex min-w-0 flex-1 flex-col border-l-[5px] border-[#abcffd]">
      <div className="flex min-h-0 flex-1">
        <div className="relative flex min-w-0 flex-1 items-start justify-center overflow-hidden bg-linear-to-b from-[#a3c3ec] via-[#7495c4] via-50% to-[#5f8bc6] pt-[19px]">
          <svg viewBox="0 0 260 75" className="absolute top-0 left-0 h-[75px] w-[260px]" aria-hidden="true">
            <path d="M0 73Q110 40 260 0H0z" fill="#fff" opacity=".18" />
            <path d="M0 73Q110 40 260 0" fill="none" stroke="#fff" opacity=".35" />
          </svg>
          <Slide />
        </div>
        <div className="flex w-4 shrink-0 flex-col">
          <Scroll>
            <div className="mt-[49px] mb-auto flex h-[20px] w-[15px] items-center justify-center rounded-[1px] border border-[#5c6f9f] bg-linear-to-r from-[#f4f6fa] to-[#bccce4]"><Grip /></div>
          </Scroll>
          <div className="flex h-12 flex-col items-center gap-[7px] bg-[#a9c6f1] pt-1">
            <button aria-label="Предыдущий слайд"><svg viewBox="0 0 7 9" className="h-[9px] w-[7px]"><path d="M0 4h7L3.500 0zM0 9h7L3.500 5z" /></svg></button>
            <button aria-label="Следующий слайд"><svg viewBox="0 0 7 9" className="h-[9px] w-[7px]"><path d="M0 0h7L3.500 4zM0 5h7L3.500 9z" /></svg></button>
          </div>
        </div>
      </div>
      <div className="h-[6px] shrink-0 border-t border-b border-t-white border-b-[#6594d6] bg-[#abcffd]" />
      <div className="flex h-[37px] shrink-0">
        <textarea aria-label="Заметки" defaultValue="Заметки к слайду" className="min-w-0 flex-1 resize-none overflow-hidden bg-white px-[10px] py-[5px] text-[15px] leading-[20px] text-black outline-none" />
        <Scroll faded />
      </div>
    </main>
  );
}

/* ---------- bottom bars ---------- */

function Round({ plus }: { plus?: boolean }) {
  return (
    <button aria-label={plus ? 'Увеличить' : 'Уменьшить'}>
      <svg viewBox="0 0 16 16" className="size-4">
        <circle cx="8" cy="8" r="7.300" fill="#dbe6f4" stroke="#52709f" strokeWidth="1.200" />
        <path d={plus ? 'M4 8h8M8 4v8' : 'M4 8h8'} stroke="#3e5173" strokeWidth="2" />
      </svg>
    </button>
  );
}

function StatusBar() {
  return (
    <footer className="flex h-[22px] shrink-0 items-stretch border-t border-[#567db1] text-[11px] text-[#15296f]">
      <div className="flex flex-1 items-stretch bg-linear-to-b from-[#d9e7fa] from-30% via-[#bbd3f4] via-45% to-[#d8e7fa] whitespace-nowrap">
        <span className="flex w-[88px] items-center border-r border-[#8fb1df] pl-2">Слайд 3 из 22</span>
        <span className="flex w-[59px] items-center justify-center border-r border-[#8fb1df] shadow-[inset_1px_0_0_#fff]">"Эркер"</span>
        <span className="flex w-[60px] items-center justify-center border-r border-[#8fb1df] shadow-[inset_1px_0_0_#fff]">русский</span>
      </div>
      <div className="flex w-[264px] items-center border-l-2 border-[#6f93c5] bg-linear-to-b from-[#a9c7ef] to-[#7799c8] pl-[3px]">
        <div className="flex h-[18px] divide-x divide-[#9db3d6] rounded-[2px] border border-[#7590bc] bg-[#d5e2f4]">
          <button aria-label="Обычный" className="flex w-[18px] items-center justify-center">
            <svg viewBox="0 0 11 9" className="h-[9px] w-[11px]"><path d="M.5.5h10v8H.5zM3.500 1v8M5.500 2.500h3v2.500h-3zM5 7h4" fill="none" stroke="#3e4d68" /></svg>
          </button>
          <button aria-label="Сортировщик" className="flex w-[18px] items-center justify-center">
            <svg viewBox="0 0 11 9" className="h-[9px] w-[11px]"><path d="M.5.5h4v3h-4zM6.500.5h4v3h-4zM.5 5.500h4v3h-4zM6.500 5.500h4v3h-4z" fill="none" stroke="#3e4d68" /></svg>
          </button>
          <button aria-label="Показ" className="flex w-[18px] items-center justify-center">
            <svg viewBox="0 0 11 10" className="h-[10px] w-[11px]"><path d="M0 .7h11M1.500 1v4.500h8V1M5.500 6v3M3 9.500h5M4 3.500h3" fill="none" stroke="#3e4d68" strokeWidth="1.200" /></svg>
          </button>
        </div>
        <span className="w-[38px] text-center">69%</span>
        <Round />
        <label className="relative mx-px block h-[15px] w-[101px]">
          <svg viewBox="0 0 101 15" className="absolute inset-0 h-[15px] w-[101px]" aria-hidden="true">
            <path d="M0 7.500h101M51.500 4v7" stroke="#dce9fb" />
            <path d="M0 8.500h101" stroke="#5e7fb0" />
            <path d="M30.500 1.500h8v8l-4 4-4-4z" fill="#dde7f5" stroke="#4d6289" />
            <path d="M34.500 4v5" stroke="#74869f" />
          </svg>
          <input type="range" aria-label="Масштаб" min={0} max={100} defaultValue={34} className="absolute inset-0 w-full opacity-0" />
        </label>
        <Round plus />
        <button aria-label="Вписать в окно" className="ml-[9px]">
          <svg viewBox="0 0 16 16" className="size-4">
            <rect x=".5" y=".5" width="15" height="15" rx="1.500" fill="#e4ecf7" stroke="#647ba2" />
            <rect x="2.500" y="2.500" width="11" height="11" fill="none" stroke="#43526e" strokeDasharray="1 1" />
            <path d="M8 2v4M8 10v4M2 8h4M10 8h4M6.500 3.500L8 2l1.500 1.500M6.500 12.500L8 14l1.500-1.500M3.500 6.500L2 8l1.500 1.500M12.500 6.500L14 8l-1.500 1.500" fill="none" stroke="#43526e" />
          </svg>
        </button>
      </div>
    </footer>
  );
}

function Task({ text, active, children }: { text: string; active?: boolean; children: ReactNode }) {
  return (
    <button
      className={`flex h-6 w-[158px] shrink-0 items-center gap-[4px] rounded-[3px] border pl-[8px] text-[11px] whitespace-nowrap text-white ${active ? 'border-[#123f9a] bg-[#1c4fb8]' : 'border-[#2c66dd] bg-linear-to-b from-[#5a9bfb] from-5% via-[#3b7df3] via-25% to-[#3675ec]'}`}
    >
      {children}
      <span>{text}</span>
    </button>
  );
}

function TaskBar() {
  return (
    <div className="flex h-[30px] shrink-0 items-center overflow-hidden bg-linear-to-b from-[#3f84ee] from-3% via-[#2459d8] via-15% to-[#1f50c8]">
      <button className="mr-[10px] flex h-full w-[86px] items-center gap-px rounded-r-[10px] bg-linear-to-b from-[#6cbb62] from-3% via-[#3b9437] via-20% to-[#2e7c2c] pl-[10px] font-['Open_Sans',sans-serif] text-[16px] font-bold text-white italic shadow-[inset_-3px_-1px_5px_#1d5a1c,1px_0_3px_#0e2f86] [text-shadow:1px_1px_2px_#1b3f1a]">
        <svg viewBox="0 0 15 15" className="size-[15px] shrink-0" aria-hidden="true">
          <path d="M2 2q3-2 5.500 0l-1 5q-3-1.500-5.500 0z" fill="#f0592b" />
          <path d="M8.500 2.500q3 1.500 6 0l-1 5q-3 1.500-6 0z" fill="#7cc243" />
          <path d="M1 8.500q3-2 5.500 0l-1 5q-3-2-5.500 0z" fill="#4f8ff0" />
          <path d="M7.500 9q3 1.500 6 0l-1 5q-3 1.500-6 0z" fill="#fccb2e" />
        </svg>
        пуск
      </button>
      <div className="flex gap-[2px]">
        <Task text="Введение Федераль...">
          <svg viewBox="0 0 16 16" className="size-4"><path d="M5.500.5h10v14h-10z" fill="#f5f8ff" stroke="#8ea8d8" /><path d="M8 3.500h6M8 5.500h6M8 7.500h6M8 9.500h6" stroke="#7d9bd1" /><rect y="3" width="11" height="10" rx="1" fill="#2a5db8" /><path d="M2 5.500l1.500 5 2-4.500 2 4.500L9 5.500" fill="none" stroke="#fff" strokeWidth="1.300" /></svg>
        </Task>
        <Task text="Решение задач по т...">
          <svg viewBox="0 0 16 16" className="size-4"><ellipse cx="5" cy="10" rx="5" ry="3" fill="#173e93" /><ellipse cx="9.500" cy="8" rx="4.500" ry="6" fill="none" stroke="#d3252b" strokeWidth="3" /><ellipse cx="9.500" cy="8" rx="2" ry="4.500" fill="#f6eeee" /></svg>
        </Task>
        <Task text="C:\Documents and Se...">
          <svg viewBox="0 0 16 16" className="size-4"><path d="M2 2h5v12H2z" fill="#f5e29b" stroke="#bb9a3f" /><path d="M6 1l7 2v12l-7-1z" fill="#fbeeb5" stroke="#c9a94d" /><path d="M10 3v11" stroke="#d8bf6b" /></svg>
        </Task>
        <Task text="Microsoft PowerPoint ..." active>
          <svg viewBox="0 0 16 16" className="size-4"><rect x=".5" y=".5" width="15" height="15" rx="2" fill="#d4532b" stroke="#f3a68b" /><rect x="3" y="5" width="10" height="9" fill="#fff" /><circle cx="8" cy="9.500" r="3" fill="none" stroke="#d4532b" strokeWidth="1.600" /><path d="M3 3h6" stroke="#fff" strokeWidth="1.500" /></svg>
        </Task>
      </div>
      <div className="ml-auto flex h-full items-center text-[11px] text-white">
        <span className="mr-[11px] bg-[#316ac5] px-px leading-4">EN</span>
        <div className="flex h-full items-center">
          <button aria-label="Скрытые значки" className="relative z-10 -mr-[9px]">
            <svg viewBox="0 0 18 18" className="size-[18px]"><circle cx="9" cy="9" r="8.500" fill="#2d93ea" stroke="#6dbcf6" /><path d="M10.500 5L6.500 9l4 4" fill="none" stroke="#fff" strokeWidth="2" /></svg>
          </button>
          <div className="flex h-full w-[74px] items-center gap-[5px] border-l border-[#0e4bb0] bg-linear-to-b from-[#2fb8f8] from-3% via-[#1290e8] via-20% to-[#1183de] pl-[10px]">
            <svg viewBox="0 0 16 16" className="size-4 shrink-0" aria-label="Антивирус">
              <rect width="13" height="14" fill="#e9e5e0" />
              <path d="M0 0h5v5l5-5h4L6 8l5 6H0z" fill="#d8232a" />
              <path d="M10.500 6L16 15.500H5z" fill="#f7d34a" stroke="#8e6b12" strokeWidth=".8" />
              <path d="M10.500 9v3.500M10.500 13.500v1" stroke="#3a2c05" strokeWidth="1.200" />
            </svg>
            <time>14:07</time>
          </div>
        </div>
      </div>
    </div>
  );
}

export default function App() {
  return (
    <div className="flex h-screen min-h-[600px] flex-col overflow-hidden bg-[#bfdbff] font-['Noto_Sans',sans-serif]">
      <TitleBar />
      <TabStrip />
      <Ribbon />
      <div className="flex min-h-0 flex-1">
        <SidePane />
        <Workspace />
      </div>
      <StatusBar />
      <TaskBar />
    </div>
  );
}
